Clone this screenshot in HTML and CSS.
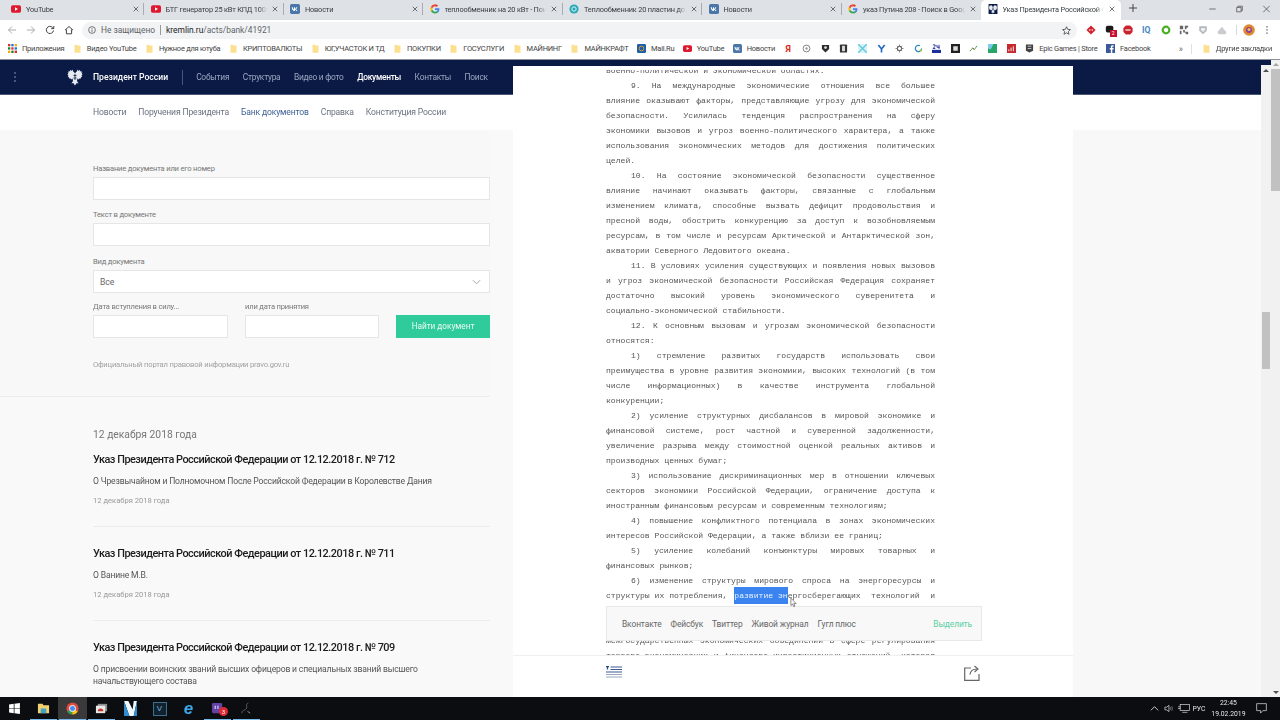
FILE: index.html
```html
<!DOCTYPE html>
<html lang="ru">
<head>
<meta charset="utf-8">
<title>Указ Президента Российской Федерации</title>
<link rel="stylesheet" href="styles.css">
</head>
<body>
<svg class="defs" width="0" height="0" aria-hidden="true">
  <symbol id="yt" viewBox="0 0 12 12"><rect x="0" y="1.5" width="12" height="9" rx="2.2" fill="#e0182d"/><path d="M4.8 3.9v4.2L8.4 6z" fill="#fff"/></symbol>
  <symbol id="vk" viewBox="0 0 12 12"><rect width="12" height="12" rx="2" fill="#4a76a8"/><path d="M2 4h1.3c.3 1.5 1 2.6 1.5 2.7V4H6v1.9c.6 0 1.2-1 1.5-1.9h1.2c-.2 1-1 2-1.5 2.3.6.3 1.4 1.1 1.8 2.2H7.7c-.3-.8-1-1.5-1.700-1.500v1.500h-.4C3.500 8.500 2.300 6.800 2 4z" fill="#fff"/></symbol>
  <symbol id="g" viewBox="0 0 12 12"><path d="M11.3 6.100c0-.4 0-.8-.1-1.100H6v2.200h3a2.600 2.600 0 0 1-1.100 1.700l1.800 1.400c1-1 1.600-2.400 1.600-4.200z" fill="#4285f4"/><path d="M6 11.500c1.500 0 2.700-.5 3.700-1.300L7.900 8.800c-.5.300-1.100.5-1.900.5-1.400 0-2.700-1-3.100-2.300L1 8.500c.9 1.800 2.800 3 5 3z" fill="#34a853"/><path d="M2.900 7a3.300 3.300 0 0 1 0-2L1 3.500a5.500 5.500 0 0 0 0 5z" fill="#fbbc05"/><path d="M6 2.700c.8 0 1.500.3 2.100.8l1.600-1.600A5.500 5.500 0 0 0 1 3.500L2.900 5C3.300 3.700 4.600 2.700 6 2.700z" fill="#ea4335"/></symbol>
  <symbol id="x" viewBox="0 0 8 8"><path d="M1 1l6 6M7 1L1 7" stroke="#444" stroke-width="1" fill="none"/></symbol>
  <symbol id="folder" viewBox="0 0 10 12"><path d="M1 1h3l1 1h4v9.500H1z" fill="#fbe08f"/></symbol>
  <symbol id="eagle" viewBox="0 0 16 18"><path d="M8 5.500 6.600 3.600 5.200 1.500 4.800 3 3.300 1.800 3 3.400 1.500 2.800 1.800 4.500.6 4.500 1.300 6 .4 6.500 1.500 7.800.8 8.800 2.200 9.400 2 10.600 3.600 10.400 4.200 11.500 5.600 10.500 6 13 4.400 15.500 6.300 15 8 17.500 9.700 15 11.600 15.500 10 13 10.400 10.500 11.800 11.500 12.400 10.400 14 10.600 13.800 9.400 15.200 8.800 14.500 7.800 15.600 6.500 14.700 6 15.400 4.500 14.200 4.500 14.500 2.800 13 3.400 12.700 1.800 11.200 3 10.800 1.500 9.400 3.600z" fill="#e6e9f0"/><path d="M8 6v6M6.500 7.500h3M6.500 10h3M6.200 2.200l1 1.800M9.800 2.200l-1 1.800" stroke="#0a1a45" stroke-width=".8" fill="none"/></symbol>
</svg>

<div class="browser">
  <div class="tabs">
    <div class="tab"><svg class="fav"><use href="#yt"/></svg><span class="tab-t">YouTube</span><svg class="close"><use href="#x"/></svg></div>
    <div class="tab"><svg class="fav"><use href="#yt"/></svg><span class="tab-t">БТГ генератор 25 кВт КПД 1000</span><svg class="close"><use href="#x"/></svg></div>
    <div class="tab"><svg class="fav"><use href="#vk"/></svg><span class="tab-t">Новости</span><svg class="close"><use href="#x"/></svg></div>
    <div class="tab"><svg class="fav"><use href="#g"/></svg><span class="tab-t">теплообменник на 20 кВт - Пои</span><svg class="close"><use href="#x"/></svg></div>
    <div class="tab"><svg class="fav" viewBox="0 0 12 12"><circle cx="6" cy="6" r="5.500" fill="#29a9b8"/><circle cx="6" cy="6" r="2.600" fill="none" stroke="#d6f1f4" stroke-width="1.200"/></svg><span class="tab-t">Теплообменник 20 пластин до</span><svg class="close"><use href="#x"/></svg></div>
    <div class="tab"><svg class="fav"><use href="#vk"/></svg><span class="tab-t">Новости</span><svg class="close"><use href="#x"/></svg></div>
    <div class="tab tab-pre"><svg class="fav"><use href="#g"/></svg><span class="tab-t">указ Путина 208 - Поиск в Goog</span><svg class="close"><use href="#x"/></svg></div>
    <div class="tab tab-active"><svg class="fav" viewBox="0 0 16 18"><rect width="16" height="18" fill="#0a1a45"/><use href="#eagle"/></svg><span class="tab-t">Указ Президента Российской Ф</span><svg class="close"><use href="#x"/></svg></div>
    <svg class="plus" viewBox="0 0 10 10"><path d="M5 0v10M0 5h10" stroke="#333" stroke-width="1.100"/></svg>
    <div class="win">
      <svg class="win-b" viewBox="0 0 10 10"><path d="M1 5h8" stroke="#555"/></svg>
      <svg class="win-b" viewBox="0 0 10 10"><path d="M3 3V1.500h5.500V7H7M1.500 3H7v5.500H1.500z" stroke="#555" fill="none"/></svg>
      <svg class="win-b" viewBox="0 0 10 10"><path d="M1 1l8 8M9 1l-8 8" stroke="#555"/></svg>
    </div>
  </div>

  <div class="toolbar">
    <svg class="tool" viewBox="0 0 10 10"><path d="M9 5H1.500M5 1.500 1.500 5 5 8.500" stroke="#a8abb0" fill="none"/></svg>
    <svg class="tool" viewBox="0 0 10 10"><path d="M1 5h7.500M5 1.500 8.500 5 5 8.500" stroke="#a8abb0" fill="none"/></svg>
    <svg class="tool" viewBox="0 0 10 10"><path d="M8.500 5.500A3.600 3.600 0 1 1 7.500 2.400L8.800 3.600M8.800 1v2.600H6.200" stroke="#444" fill="none"/></svg>
    <svg class="tool" viewBox="0 0 10 10"><path d="M1 5.200 5 1.500l4 3.700M2.400 4.400V8.800h5.200V4.400" stroke="#444" fill="none"/></svg>
    <div class="omni">
      <svg class="info" viewBox="0 0 10 10"><circle cx="5" cy="5" r="4.200" stroke="#555" fill="none"/><path d="M5 4.400v3M5 2.500v1" stroke="#555"/></svg>
      <span class="unsafe">Не защищено</span>
      <span class="url"><b>kremlin.ru</b>/acts/bank/41921</span>
      <svg class="star" viewBox="0 0 10 10"><path d="M5 .8 6.300 3.700l3.100.3-2.300 2.100.7 3.100L5 7.600 2.200 9.200l.7-3.100L.6 4l3.100-.3z" stroke="#444" fill="none" stroke-width=".9"/></svg>
    </div>
    <div class="exts">
      <svg class="ext" viewBox="0 0 12 12"><path d="M6 .5 11.500 6 6 11.500.5 6z" fill="#d3202d"/><circle cx="4.500" cy="6" r="1" fill="#fff"/><circle cx="7.500" cy="6" r="1" fill="#fff"/></svg>
      <span class="ext-badge"><svg class="ext" viewBox="0 0 12 12"><rect x="1" y="1" width="9" height="8" rx="2" fill="#1b1b1b"/></svg><span class="badge">2</span></span>
      <svg class="ext" viewBox="0 0 12 12"><path d="M3.500.5h5l3 3v5l-3 3h-5l-3-3v-5z" fill="#c8232f"/><path d="M3 6h6" stroke="#fff" stroke-width="1.400"/></svg>
      <span class="ext-iq">IQ</span>
      <svg class="ext" viewBox="0 0 12 12"><circle cx="6" cy="6" r="4" fill="none" stroke="#48b022" stroke-width="2.600"/></svg>
      <svg class="ext" viewBox="0 0 12 12"><path d="M1 1h4v4H1zM7 1h4v2H9v2H7zM1 7h2v4H1zM5 6h2v2h4v3H8V9H5z" fill="#666"/></svg>
      <svg class="ext" viewBox="0 0 12 12"><path d="M1.500 1.500h9V7L6 11 1.500 7z" fill="#b4b8bd"/><path d="M3.500 3.500h5V6L6 8.500 3.500 6z" fill="#eceef0"/></svg>
      <svg class="ext" viewBox="0 0 12 12"><path d="M6 2 9.500 6.500A2.500 2.500 0 0 1 10 11H2.500a2.500 2.500 0 0 1-.500-4.500z" fill="#c9cbce"/></svg>
      <span class="ext-sep"></span>
      <svg class="ext ext-ava" viewBox="0 0 12 12"><circle cx="6" cy="6" r="5.800" fill="#e08a2e"/><circle cx="6" cy="6" r="3" fill="#8c3fa0"/><circle cx="6" cy="5.500" r="1.500" fill="#f2c14e"/></svg>
      <svg class="ext ext-menu" viewBox="0 0 12 12"><path d="M6 1.500v1.500M6 5.200v1.500M6 9v1.500" stroke="#444" stroke-width="1.400"/></svg>
    </div>
  </div>

  <div class="bookmarks">
    <span class="bm"><svg class="bm-i" viewBox="0 0 9 9"><path d="M0 0h2.300v2.300H0z" fill="#d93025"/><path d="M3.300 0h2.300v2.300H3.300z" fill="#1a73e8"/><path d="M6.600 0H9v2.300H6.600z" fill="#f9ab00"/><path d="M0 3.300h2.300v2.300H0z" fill="#188038"/><path d="M3.300 3.300h2.300v2.300H3.300z" fill="#d93025"/><path d="M6.600 3.300H9v2.300H6.600z" fill="#1a73e8"/><path d="M0 6.600h2.300V9H0z" fill="#f9ab00"/><path d="M3.300 6.600h2.300V9H3.300z" fill="#188038"/><path d="M6.600 6.600H9V9H6.600z" fill="#d93025"/></svg>Приложения</span>
    <span class="bm"><svg class="bm-i"><use href="#folder"/></svg>Видео YouTube</span>
    <span class="bm"><svg class="bm-i"><use href="#folder"/></svg>Нужное для ютуба</span>
    <span class="bm"><svg class="bm-i"><use href="#folder"/></svg>КРИПТОВАЛЮТЫ</span>
    <span class="bm"><svg class="bm-i"><use href="#folder"/></svg>ЮГ,УЧАСТОК И ТД</span>
    <span class="bm"><svg class="bm-i"><use href="#folder"/></svg>ПОКУПКИ</span>
    <span class="bm"><svg class="bm-i"><use href="#folder"/></svg>ГОСУСЛУГИ</span>
    <span class="bm"><svg class="bm-i"><use href="#folder"/></svg>МАЙНИНГ</span>
    <span class="bm"><svg class="bm-i"><use href="#folder"/></svg>МАЙНКРАФТ</span>
    <span class="bm"><svg class="bm-i" viewBox="0 0 10 10"><rect width="10" height="10" rx="1.500" fill="#1d5fa8"/><circle cx="5" cy="5" r="2.600" fill="none" stroke="#f0a020"/></svg>Mail.Ru</span>
    <span class="bm"><svg class="bm-i"><use href="#yt"/></svg>YouTube</span>
    <span class="bm"><svg class="bm-i"><use href="#vk"/></svg>Новости</span>
    <span class="bm-icons">
      <span class="bm-ya">Я</span>
      <svg class="bm-i" viewBox="0 0 10 10"><circle cx="5" cy="5" r="3.800" fill="none" stroke="#777"/><circle cx="5" cy="5" r="1.300" fill="#999"/></svg>
      <svg class="bm-i" viewBox="0 0 10 10"><path d="M1 1h8v4.500L5 9.500 1 5.500z" fill="#2c2c2c"/><circle cx="5" cy="4" r="1.600" fill="#ddd"/></svg>
      <svg class="bm-i" viewBox="0 0 10 10"><rect x="1" y=".5" width="8" height="9" rx="1" fill="#333"/><rect x="3.400" y="2" width="3.200" height="6" fill="#ddd"/></svg>
      <svg class="bm-i" viewBox="0 0 10 10"><rect width="10" height="10" fill="#d5f2f6"/><path d="M0 0l10 10M10 0 0 10" stroke="#65c9dc" stroke-width="1.500"/></svg>
      <svg class="bm-i" viewBox="0 0 10 10"><path d="M1.500 1 5 5.500 8.500 1M5 5.500V9.500" stroke="#1f67c4" stroke-width="1.800" fill="none"/></svg>
      <svg class="bm-i" viewBox="0 0 10 10"><path d="M5 .5v9M.5 5h9M2 2l6 6M8 2 2 8" stroke="#888"/><circle cx="5" cy="5" r="2.400" fill="#fff" stroke="#333"/></svg>
      <svg class="bm-i" viewBox="0 0 10 10"><path d="M8.500 5A3.500 3.500 0 1 1 6.500 1.800" fill="none" stroke="#2a87b8" stroke-width="1.300"/><circle cx="7.500" cy="7" r="1.300" fill="#a4c949"/></svg>
      <svg class="bm-i" viewBox="0 0 10 10"><rect y="6.500" width="10" height="3.500" fill="#1a2f9a"/><path d="M1 1h2.500v1.700L1 5h2.700M5.500 1v2.600h3M7.800 1v4.500" stroke="#1a2f9a" fill="none"/></svg>
      <svg class="bm-i" viewBox="0 0 10 10"><rect width="10" height="10" fill="#222"/><rect x="2.500" y="2.500" width="5" height="5" fill="#ddd"/></svg>
      <svg class="bm-i" viewBox="0 0 10 10"><path d="M1 8 4 4.500 6 6l3-4" stroke="#2ea14f" fill="none"/><path d="M4 4.500 6 6" stroke="#d9362b"/></svg>
      <svg class="bm-i" viewBox="0 0 10 10"><rect width="10" height="10" fill="#2aa56a"/><path d="M0 0h6L3 6 0 5z" fill="#7cc9e8"/></svg>
      <svg class="bm-i" viewBox="0 0 10 10"><rect width="10" height="10" fill="#c8272e"/><path d="M2 8V6M4.500 8V4M7 8V2.500" stroke="#fff"/></svg>
    </span>
    <span class="bm"><svg class="bm-i" viewBox="0 0 10 10"><path d="M1 .5h8v7L5 9.500 1 7.500z" fill="#444"/><path d="M3 2.500h4M3 5h4" stroke="#ccc"/></svg>Epic Games | Store</span>
    <span class="bm"><svg class="bm-i" viewBox="0 0 10 10"><rect width="10" height="10" fill="#3b5998"/><path d="M7 10V6h1.300l.2-1.500H7V3.600c0-.5.200-.7.700-.7h.8V1.500H7.300C6 1.500 5.400 2.200 5.400 3.400v1.100H4.200V6h1.200v4z" fill="#fff"/></svg>Facebook</span>
    <span class="bm-more">»</span>
    <span class="bm bm-other"><svg class="bm-i"><use href="#folder"/></svg>Другие закладки</span>
  </div>

  <div class="page">
    <div class="col-left">
      <header class="nav">
        <span class="nav-dots"></span>
        <svg class="logo"><use href="#eagle"/></svg>
        <span class="brand">Президент России</span>
        <nav class="nav-links">
          <a>События</a><a>Структура</a><a>Видео и фото</a><a class="on">Документы</a><a>Контакты</a><a>Поиск</a>
        </nav>
      </header>
      <div class="subnav">
        <a>Новости</a><a>Поручения Президента</a><a class="on">Банк документов</a><a>Справка</a><a>Конституция России</a>
      </div>
      <div class="left-body">
        <form class="search">
          <div class="group"><label class="lbl">Название документа или его номер</label><div class="field"></div></div>
          <div class="group"><label class="lbl">Текст в документе</label><div class="field"></div></div>
          <div class="group group-sel"><label class="lbl">Вид документа</label>
            <div class="field field-sel"><span>Все</span><svg class="chev" viewBox="0 0 10 6"><path d="M1 1l4 4 4-4" stroke="#999" fill="none"/></svg></div>
          </div>
          <div class="dates">
            <div class="group"><label class="lbl">Дата вступления в силу...</label><div class="field"></div></div>
            <div class="group"><label class="lbl">или дата принятия</label><div class="field"></div></div>
            <div class="btn">Найти документ</div>
          </div>
          <p class="portal">Официальный портал правовой информации pravo.gov.ru</p>
        </form>
        <section class="list">
          <h2 class="day">12 декабря 2018 года</h2>
          <article class="item">
            <h3>Указ Президента Российской Федерации от 12.12.2018 г. № 712</h3>
            <p class="sub">О Чрезвычайном и Полномочном После Российской Федерации в Королевстве Дания</p>
            <p class="date">12 декабря 2018 года</p>
          </article>
          <article class="item">
            <h3>Указ Президента Российской Федерации от 12.12.2018 г. № 711</h3>
            <p class="sub">О Ванине М.В.</p>
            <p class="date">12 декабря 2018 года</p>
          </article>
          <article class="item">
            <h3>Указ Президента Российской Федерации от 12.12.2018 г. № 709</h3>
            <p class="sub">О присвоении воинских званий высших офицеров и специальных званий высшего<br>начальствующего состава</p>
          </article>
        </section>
      </div>
    </div>

    <div class="col-doc">
      <div class="sheet">
        <div class="doc-scroll">
          <div class="lines">
            <div class="e">военно-политической и экономической областях.</div>
            <div class="i">9. На международные экономические отношения все большее</div>
            <div>влияние оказывают факторы, представляющие угрозу для экономической</div>
            <div>безопасности. Усилилась тенденция распространения на сферу</div>
            <div>экономики вызовов и угроз военно-политического характера, а также</div>
            <div>использования экономических методов для достижения политических</div>
            <div class="e">целей.</div>
            <div class="i">10. На состояние экономической безопасности существенное</div>
            <div>влияние начинают оказывать факторы, связанные с глобальным</div>
            <div>изменением климата, способные вызвать дефицит продовольствия и</div>
            <div>пресной воды, обострить конкуренцию за доступ к возобновляемым</div>
            <div>ресурсам, в том числе и ресурсам Арктической и Антарктической зон,</div>
            <div class="e">акватории Северного Ледовитого океана.</div>
            <div class="i">11. В условиях усиления существующих и появления новых вызовов</div>
            <div>и угроз экономической безопасности Российская Федерация сохраняет</div>
            <div>достаточно высокий уровень экономического суверенитета и</div>
            <div class="e">социально-экономической стабильности.</div>
            <div class="i">12. К основным вызовам и угрозам экономической безопасности</div>
            <div class="e">относятся:</div>
            <div class="i">1) стремление развитых государств использовать свои</div>
            <div>преимущества в уровне развития экономики, высоких технологий (в том</div>
            <div>числе информационных) в качестве инструмента глобальной</div>
            <div class="e">конкуренции;</div>
            <div class="i">2) усиление структурных дисбалансов в мировой экономике и</div>
            <div>финансовой системе, рост частной и суверенной задолженности,</div>
            <div>увеличение разрыва между стоимостной оценкой реальных активов и</div>
            <div class="e">производных ценных бумаг;</div>
            <div class="i">3) использование дискриминационных мер в отношении ключевых</div>
            <div>секторов экономики Российской Федерации, ограничение доступа к</div>
            <div class="e">иностранным финансовым ресурсам и современным технологиям;</div>
            <div class="i">4) повышение конфликтного потенциала в зонах экономических</div>
            <div class="e">интересов Российской Федерации, а также вблизи ее границ;</div>
            <div class="i">5) усиление колебаний конъюнктуры мировых товарных и</div>
            <div class="e">финансовых рынков;</div>
            <div class="i">6) изменение структуры мирового спроса на энергоресурсы и</div>
            <div><span class="tight">структуры их потребления, <span class="sel">развитие эн</span>ергосберегающих</span> технологий и</div>
            <div class="hid">снижение материалоемкости, развитие "зеленых технологий";</div>
            <div class="hid i">7) деятельность, в том числе в рамках отдельных</div>
            <div>межгосударственных экономических объединений в сфере регулирования</div>
            <div>торгово-экономических и финансово-инвестиционных отношений, которая</div>
          </div>
          <div class="share-pop">
            <a>Вконтакте</a><a>Фейсбук</a><a>Твиттер</a><a>Живой журнал</a><a>Гугл плюс</a>
            <a class="pick">Выделить</a>
          </div>
          <svg class="cursor" viewBox="0 0 8 12"><path d="M1 1v8.500l2-1.800 1.300 3 1.300-.6-1.300-2.900H7z" fill="#fff" stroke="#444" stroke-width=".7"/></svg>
        </div>
        <div class="doc-bar">
          <svg class="toc" viewBox="0 0 16 13"><path d="M0 .7h3M1.500.7V3.500" stroke="#2b4a86" stroke-width="1.300"/><path d="M4.500 1h11.500M4.500 3.500h11.500M0 6h16" stroke="#3d5a94" stroke-width="1.100"/><path d="M0 8.500h16M0 11h16" stroke="#9aa5bc"/></svg>
          <svg class="share" viewBox="0 0 16 16"><path d="M7 3H.7v12.300H15V9" stroke="#666" fill="none" stroke-width="1.200"/><path d="M6 9.500C6.500 6 9 4 12.500 4M10.500 1l3.500 3-3.500 3" stroke="#666" fill="none" stroke-width="1.200"/></svg>
        </div>
      </div>
    </div>

    <div class="col-right">
      <div class="right-nav"></div>
      <div class="right-white"></div>
      <div class="right-gray"></div>
    </div>

    <div class="inner-scroll">
      <div class="track">
        <span class="arrow-top"></span>
        <span class="thumb"></span>
      </div>
    </div>

    <div class="outer-scroll">
      <span class="arrow-o"></span>
      <span class="thumb-o"></span>
      <span class="arrow-o arrow-d"></span>
    </div>
  </div>

  <footer class="taskbar">
    <span class="tb"><svg class="tb-i" viewBox="0 0 12 12"><path d="M1 2.300 5.300 1.700V5.700H1zM6 1.600 11 1V5.700H6zM1 6.300H5.300V10.300L1 9.700zM6 6.300H11V11L6 10.400z" fill="#fff"/></svg></span>
    <span class="tb tb-run"><svg class="tb-i" viewBox="0 0 14 12"><path d="M1 1h5l1 1.500h6V11H1z" fill="#f4cf6d"/><rect x="4" y="6" width="6" height="5" fill="#3fa4c9"/></svg></span>
    <span class="tb tb-run tb-act"><svg class="tb-i" viewBox="0 0 14 14"><circle cx="7" cy="7" r="6.500" fill="#dd4b3e"/><path d="M7 7 1.300 10.200A6.500 6.500 0 0 0 7 13.500z" fill="#2f9e4f"/><path d="M7 7l5.700 3.200A6.500 6.500 0 0 1 7 13.500z" fill="#f4c20d"/><circle cx="7" cy="7" r="3.300" fill="#4a8df0" stroke="#fff"/></svg></span>
    <span class="tb tb-run"><svg class="tb-i" viewBox="0 0 14 12"><rect x="3" y="1" width="10" height="8" fill="#8d8d8d"/><rect x="1" y="3" width="10" height="8" fill="#e8e8e8"/><path d="M3 9a3 3 0 0 1 6 0" fill="#c0392b"/></svg></span>
    <span class="tb"><svg class="tb-i tb-big" viewBox="0 0 14 14"><path d="M1 0h4l4 8 1-8h3L10 14H6z" fill="#f2f7fb"/><path d="M1 0l5 14H1z" fill="#2e8fd6"/><path d="M10 14 13 0v14z" fill="#2e8fd6"/></svg></span>
    <span class="tb"><span class="tb-v">V</span></span>
    <span class="tb"><span class="tb-e">e</span></span>
    <span class="tb tb-run"><svg class="tb-i" viewBox="0 0 14 14"><rect x="1" y="1" width="11" height="11" rx="1.500" fill="#6441a5"/><path d="M4.500 4v3.500M7.500 4v3.500" stroke="#fff"/></svg><span class="tb-badge">3</span></span>
    <span class="tb tb-run"><svg class="tb-i" viewBox="0 0 14 14"><path d="M9 1C5 3 9 6 6 8S2 9 2 12" stroke="#666" fill="none"/><path d="M8 10l3 2" stroke="#999"/></svg></span>
    <div class="tray">
      <svg class="tray-i" viewBox="0 0 10 10"><path d="M1 7l4-4 4 4" stroke="#ddd" fill="none"/></svg>
      <svg class="tray-i" viewBox="0 0 10 10"><path d="M1 3.500h2L5.500 1.500v7L3 6.500H1z" fill="none" stroke="#ddd" stroke-width=".8"/><path d="M7 3.500c.7 1 .7 2 0 3M8.500 2.500c1 1.500 1 3.500 0 5" stroke="#aaa" fill="none" stroke-width=".7"/></svg>
      <svg class="tray-n" viewBox="0 0 14 10"><rect x="2.500" y=".5" width="11" height="7" fill="none" stroke="#ddd" stroke-width=".8"/><path d="M5 9.500h6M0 3h3M0 5h3" stroke="#ddd" stroke-width=".8"/></svg>
      <span class="lang">РУС</span>
      <span class="clock"><span>22:45</span><span>19.02.2019</span></span>
      <svg class="notif" viewBox="0 0 12 12"><path d="M.7.700h10.600v7.600H7.500L5 11V8.300H.7z" fill="none" stroke="#ddd" stroke-width=".8"/></svg>
    </div>
  </footer>
</div>
</body>
</html>
```

FILE: styles.css
```css
* { box-sizing: border-box; }
html, body { margin: 0; height: 100%; overflow: hidden; background: #fff; }
body { font-family: Roboto, "Liberation Sans", sans-serif; }
.defs { position: absolute; }
a { color: inherit; text-decoration: none; }
p, h2, h3 { margin: 0; font-weight: 400; }

.browser { width: 1280px; height: 720px; display: flex; flex-direction: column; filter: blur(.3px); overflow: hidden; }

/* tabs */
.tabs { height: 20px; background: #dee1e6; display: flex; align-items: stretch; padding-left: 4.5px; flex: none; }
.tab { width: 139.5px; display: flex; align-items: center; padding: 0 5.5px 2px 6.5px; position: relative; font-size: 7.4px; letter-spacing: -.2px; color: #3c4043; }
.tab::after { content: ""; position: absolute; right: 0; top: 3px; bottom: 5px; width: 1px; background: #a8abb0; }
.tab-pre::after, .tab-active::after { display: none; }
.tab-active { background: #fff; border-radius: 5px 5px 0 0; }
.fav { width: 10px; height: 10px; flex: none; margin-right: 5px; }
.tab-t { flex: 1; min-width: 0; white-space: nowrap; overflow: hidden; -webkit-mask-image: linear-gradient(90deg, #000 92%, transparent); mask-image: linear-gradient(90deg, #000 92%, transparent); }
.close { width: 6px; height: 6px; flex: none; margin-left: 5px; }
.plus { width: 8px; height: 8px; margin: 4px 0 0 8px; flex: none; }
.win { margin-left: auto; display: flex; align-items: center; padding-bottom: 2px; }
.win-b { width: 27px; height: 8px; }

/* toolbar */
.toolbar { height: 20px; background: #fff; display: flex; align-items: center; flex: none; padding-left: 7px; }
.tool { width: 10px; height: 10px; margin-right: 9px; flex: none; }
.omni { margin-left: -1px; width: 995px; height: 17px; border-radius: 9px; background: #f1f3f4; display: flex; align-items: center; padding-left: 6px; font-size: 8.4px; color: #5f6368; flex: none; white-space: nowrap; }
.info { width: 8px; height: 8px; margin-right: 5px; flex: none; }
.unsafe { padding-right: 5px; border-right: 1px solid #999; line-height: 10px; margin-right: 5px; }
.url b { font-weight: 400; color: #202124; }
.star { width: 9px; height: 9px; margin-left: auto; margin-right: 6px; }
.exts { display: flex; align-items: center; padding-left: 9px; }
.ext { width: 10px; height: 10px; margin-right: 8.7px; flex: none; display: block; }
.ext-badge { position: relative; display: block; }
.badge { position: absolute; left: 5px; top: 5px; width: 7px; height: 7px; background: #c8102e; color: #fff; font-size: 5px; line-height: 7px; text-align: center; }
.ext-iq { width: 10px; margin-right: 8.7px; font-size: 8.5px; font-weight: 700; color: #3f87c4; line-height: 10px; }
.ext-sep { width: 1px; height: 10px; background: #d5d7da; margin: 0 3px 0 0; }
.ext-ava { width: 12px; height: 12px; margin: 0 7px 0 3px; }
.ext-menu { margin-right: 0; }

/* bookmarks */
.bookmarks { height: 20px; background: #fff; border-bottom: 1px solid #8a8f98; display: flex; align-items: center; flex: none; font-size: 7.5px; letter-spacing: -.25px; color: #444; padding: 0 0 2px 8px; white-space: nowrap; }
.bm { display: flex; align-items: center; margin-right: 8.5px; }
.bm-i { width: 9px; height: 9px; margin-right: 5px; flex: none; display: block; }
.bm-icons { display: flex; align-items: center; }
.bm-icons .bm-i { margin-right: 9.6px; }
.bm-ya { width: 9px; margin-right: 9.6px; color: #d9261c; font-weight: 700; font-size: 9px; text-align: center; }
.bm-more { margin-left: auto; margin-right: 10px; color: #666; font-size: 9px; padding-right: 8px; border-right: 1px solid #e0e0e0; }
.bm-other { margin-right: 8px; }

/* page */
.page { flex: 1; min-height: 0; display: flex; }
.col-left { width: 513px; flex: none; display: flex; flex-direction: column; background: #f9f9f9; }
.nav { height: 35px; flex: none; background: #0a1a45; border-bottom: 1px solid #4b5778; display: flex; align-items: center; color: #9aa6c0; position: relative; }
.nav-dots { width: 2px; height: 2px; margin-left: 14px; background: #46567e; box-shadow: 0 -4px 0 #46567e, 0 4px 0 #46567e; flex: none; }
.logo { width: 16px; height: 18px; margin-left: 51px; flex: none; }
.brand { margin-left: 10px; color: #fff; font-size: 8.6px; font-weight: 500; padding-right: 14px; border-right: 1px solid #46567e; line-height: 15px; white-space: nowrap; }
.nav-links { display: flex; gap: 13.5px; margin-left: 13px; white-space: nowrap; font-size: 8.4px; letter-spacing: -.25px; }
.nav-links .on { color: #fff; font-weight: 500; }
.subnav { height: 35px; flex: none; background: #fff; display: flex; align-items: center; gap: 12px; padding: 0 0 2px 93px; font-size: 8.6px; letter-spacing: -.17px; color: #6b7280; white-space: nowrap; }
.subnav .on { color: #3f6296; }
.left-body { flex: 1; min-height: 0; overflow: hidden; }

/* form */
.search { margin-right: 23px; padding: 33px 0 26px 93px; border-bottom: 1px solid #ececec; background: #f8f8f8; }
.group { margin-bottom: 9px; }
.group-sel { margin-top: 10px; margin-bottom: 8px; }
.lbl { display: block; height: 12px; line-height: 12px; font-size: 7.6px; letter-spacing: -.19px; color: #777; margin-bottom: 2px; white-space: nowrap; }
.field { height: 23px; background: #fff; border: 1px solid #e6e6e6; }
.field-sel { display: flex; align-items: center; justify-content: space-between; padding: 0 8px 0 6px; font-size: 8.6px; color: #666; }
.chev { width: 9px; height: 6px; }
.dates { display: grid; grid-template-columns: 135px 134px 94px; column-gap: 17px; align-items: end; }
.dates .group { margin-bottom: 0; }
.btn { height: 23px; background: #2fcb9a; color: #e8fbf4; font-size: 8.2px; text-align: center; line-height: 23px; }
.portal { margin-top: 22px; font-size: 7.6px; letter-spacing: -.18px; line-height: 10px; color: #a2a2a2; white-space: nowrap; }

/* list */
.list { padding: 31px 23px 0 93px; }
.day { font-size: 10.3px; line-height: 14px; color: #777; margin-bottom: 10px; }
.item { padding-bottom: 19px; margin-bottom: 19px; border-bottom: 1px solid #ececec; }
.item:last-child { border-bottom: 0; }
.item h3 { font-size: 10.9px; letter-spacing: -.48px; line-height: 16px; font-weight: 500; color: #1c1c1c; white-space: nowrap; }
.sub { margin-top: 7px; font-size: 8.6px; letter-spacing: -.17px; line-height: 12px; color: #555; white-space: nowrap; }
.date { margin-top: 8px; font-size: 7.6px; line-height: 12px; color: #999; }

/* doc */
.col-doc { width: 560px; flex: none; background: #0a1a45; padding-top: 6px; display: flex; }
.sheet { flex: 1; min-width: 0; background: #fff; display: flex; flex-direction: column; min-height: 0; }
.doc-scroll { flex: 1; min-height: 0; overflow: hidden; position: relative; }
.doc-scroll::before { content: ""; position: absolute; left: 0; right: 0; top: 0; height: 4px; background: #fff; }
.lines { margin: -3px 0 0 93px; width: 329px; font-family: "Liberation Mono", monospace; font-size: 8.1px; line-height: 15px; color: #555; }
.lines div { text-align: justify; text-align-last: justify; }
.lines .e { text-align-last: left; }
.lines .i { padding-left: 25px; }
.lines .hid { visibility: hidden; }
.tight { display: inline-block; white-space: nowrap; }
.sel { background: #3b84f0; color: #eaf2ff; padding: 4px 0; margin-left: 2px; }
.share-pop { position: absolute; left: 93px; top: 540px; width: 376px; height: 35px; background: #f8f8f8; border: 1px solid #e8e8e8; display: flex; align-items: center; gap: 9px; padding: 0 9px 0 15px; font-size: 8.4px; letter-spacing: -.1px; color: #666; white-space: nowrap; }
.pick { margin-left: auto; color: #5bcea5; }
.cursor { position: absolute; left: 277px; top: 531px; width: 7px; height: 11px; }
.doc-bar { height: 42px; flex: none; background: #fff; border-top: 1px solid #f0f0f0; display: flex; align-items: center; justify-content: space-between; padding: 0 93px 8px; }
.toc { width: 16px; height: 13px; }
.share { width: 16px; height: 16px; }

/* right column */
.col-right { width: 188px; flex: none; display: flex; flex-direction: column; }
.right-nav { height: 35px; background: #0a1a45; border-bottom: 1px solid #4b5778; flex: none; }
.right-white { height: 35px; background: #fff; flex: none; }
.right-gray { flex: 1; background: #f8f8f8; }

/* scrollbars */
.inner-scroll { width: 10px; flex: none; background: #0a1a45; padding-top: 5px; display: flex; }
.track { flex: 1; background: #f1f1f1; position: relative; }
.arrow-top { position: absolute; left: 2px; top: 4px; border: 3px solid transparent; border-top: 0; border-bottom: 3px solid #505050; }
.thumb { position: absolute; left: 1px; right: 1px; top: 247px; height: 57px; background: #c1c1c1; }
.outer-scroll { width: 9px; flex: none; background: #f1f1f1; display: flex; flex-direction: column; align-items: center; padding: 3px 0; }
.arrow-o { border: 3px solid transparent; border-top: 0; border-bottom: 3px solid #a3a3a3; flex: none; }
.arrow-d { border-bottom: 0; border-top: 3px solid #505050; margin-top: auto; }
.thumb-o { width: 9px; height: 122px; background: #c1c1c1; margin-top: 3px; flex: none; }

/* taskbar */
.taskbar { height: 23px; flex: none; background: #0b0d10; display: flex; align-items: stretch; }
.tb { width: 29px; display: flex; align-items: center; justify-content: center; position: relative; }
.tb-run::after { content: ""; position: absolute; left: 1px; right: 1px; bottom: 0; height: 1px; background: #76b9ed; }
.tb-act { background: #3a3a3a; }
.tb-i { width: 13px; height: 13px; display: block; }
.tb-big { width: 15px; height: 15px; }
.tb-v { width: 14px; height: 14px; border: 1px solid #3d6f8f; background: #10222e; color: #6fb6df; font: 8px/12px "Liberation Sans", sans-serif; text-align: center; }
.tb-e { color: #3ea6e6; font: italic 700 17px/17px "Liberation Sans", sans-serif; }
.tb-badge { position: absolute; left: 16px; top: 10px; width: 9px; height: 9px; border-radius: 50%; background: #e02a33; color: #fff; font-size: 6px; line-height: 9px; text-align: center; }
.tray { margin-left: auto; display: flex; align-items: center; color: #e6e6e6; font-size: 6.8px; }
.tray-i { width: 9px; height: 9px; margin-right: 5px; flex: none; }
.tray-n { width: 12px; height: 9px; margin: 0 2px 0 0; flex: none; }
.lang { margin-right: 6px; white-space: nowrap; }
.clock { display: flex; flex-direction: column; align-items: center; line-height: 11px; margin-right: 10.5px; white-space: nowrap; }
.notif { width: 11px; height: 11px; margin-right: 13px; flex: none; }
```
